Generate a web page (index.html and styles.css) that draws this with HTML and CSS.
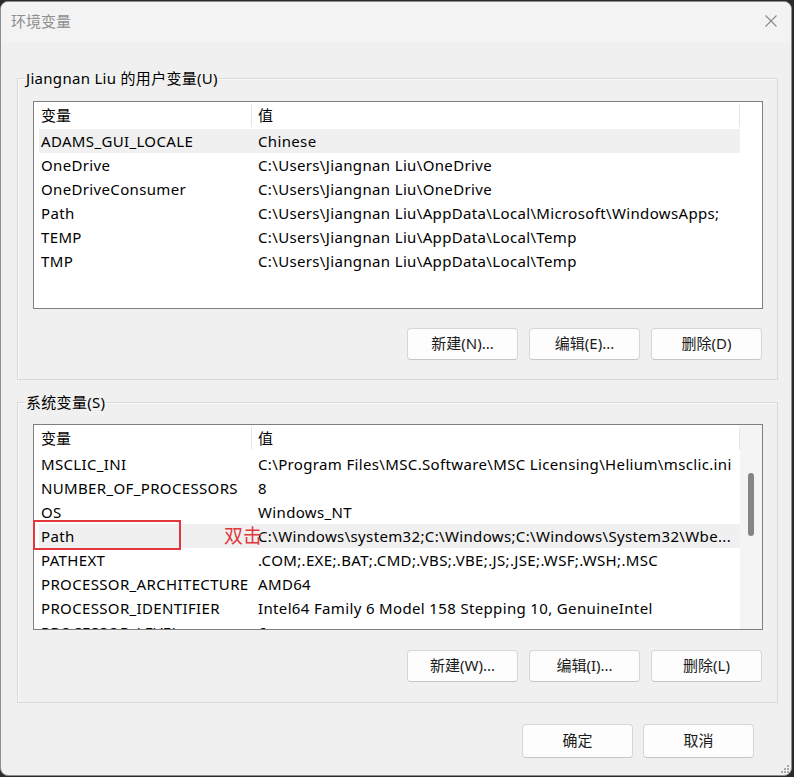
FILE: index.html
```html
<!DOCTYPE html>
<html lang="zh-CN">
<head>
<meta charset="utf-8">
<title>环境变量</title>
<link rel="stylesheet" href="styles.css">
</head>
<body>
<div class="window">
  <div class="titlebar">
    <span class="title">环境变量</span>
    <span class="close">
      <svg width="12" height="12" viewBox="0 0 12 12"><path d="M0.5 0.5 L11.5 11.5 M11.5 0.5 L0.5 11.5" stroke="#8a8a8a" stroke-width="1.1" fill="none"/></svg>
    </span>
  </div>

  <fieldset class="group group-user">
    <legend>Jiangnan Liu 的用户变量(U)</legend>
    <div class="list list-user">
      <div class="list-body">
        <div class="row head"><span class="c1">变量</span><span class="c2">值</span></div>
        <div class="row sel"><span class="c1">ADAMS_GUI_LOCALE</span><span class="c2">Chinese</span></div>
        <div class="row"><span class="c1">OneDrive</span><span class="c2">C:\Users\Jiangnan Liu\OneDrive</span></div>
        <div class="row"><span class="c1">OneDriveConsumer</span><span class="c2">C:\Users\Jiangnan Liu\OneDrive</span></div>
        <div class="row"><span class="c1">Path</span><span class="c2">C:\Users\Jiangnan Liu\AppData\Local\Microsoft\WindowsApps;</span></div>
        <div class="row"><span class="c1">TEMP</span><span class="c2">C:\Users\Jiangnan Liu\AppData\Local\Temp</span></div>
        <div class="row"><span class="c1">TMP</span><span class="c2">C:\Users\Jiangnan Liu\AppData\Local\Temp</span></div>
      </div>
      <div class="scroll-space"></div>
    </div>
    <div class="btnrow">
      <button class="btn">新建(N)...</button>
      <button class="btn">编辑(E)...</button>
      <button class="btn">删除(D)</button>
    </div>
  </fieldset>

  <fieldset class="group group-sys">
    <legend>系统变量(S)</legend>
    <div class="list list-sys">
      <div class="list-body">
        <div class="row head"><span class="c1">变量</span><span class="c2">值</span></div>
        <div class="row"><span class="c1">MSCLIC_INI</span><span class="c2">C:\Program Files\MSC.Software\MSC Licensing\Helium\msclic.ini</span></div>
        <div class="row"><span class="c1">NUMBER_OF_PROCESSORS</span><span class="c2">8</span></div>
        <div class="row"><span class="c1">OS</span><span class="c2">Windows_NT</span></div>
        <div class="row sel"><span class="c1">Path</span><span class="c2">C:\Windows\system32;C:\Windows;C:\Windows\System32\Wbe...</span></div>
        <div class="row"><span class="c1">PATHEXT</span><span class="c2">.COM;.EXE;.BAT;.CMD;.VBS;.VBE;.JS;.JSE;.WSF;.WSH;.MSC</span></div>
        <div class="row"><span class="c1">PROCESSOR_ARCHITECTURE</span><span class="c2">AMD64</span></div>
        <div class="row"><span class="c1">PROCESSOR_IDENTIFIER</span><span class="c2">Intel64 Family 6 Model 158 Stepping 10, GenuineIntel</span></div>
        <div class="row"><span class="c1">PROCESSOR_LEVEL</span><span class="c2">6</span></div>
      </div>
      <div class="scrollbar"><div class="thumb"></div></div>
      <div class="mark-box"></div>
      <div class="mark-text">双击</div>
    </div>
    <div class="btnrow">
      <button class="btn">新建(W)...</button>
      <button class="btn">编辑(I)...</button>
      <button class="btn">删除(L)</button>
    </div>
  </fieldset>

  <div class="footer">
    <button class="btn btn-lg">确定</button>
    <button class="btn btn-lg">取消</button>
  </div>

  <svg class="grip" width="9" height="9" viewBox="0 0 9 9">
    <rect x="7" y="1" width="2" height="2" fill="#a8a8a8"/>
    <rect x="4" y="4" width="2" height="2" fill="#a8a8a8"/>
    <rect x="7" y="4" width="2" height="2" fill="#a8a8a8"/>
    <rect x="1" y="7" width="2" height="2" fill="#a8a8a8"/>
    <rect x="4" y="7" width="2" height="2" fill="#a8a8a8"/>
    <rect x="7" y="7" width="2" height="2" fill="#a8a8a8"/>
  </svg>
</div>
</body>
</html>
```

FILE: styles.css
```css
* { box-sizing: border-box; }

html, body {
  margin: 0;
  padding: 0;
  background: #2a2a2a;
}

body {
  font-family: "Noto Sans", "Noto Sans CJK SC", sans-serif;
  font-size: 15px;
  color: #000;
  width: 794px;
  height: 777px;
  overflow: hidden;
}

.window {
  position: relative;
  margin-top: 1px;
  width: 792px;
  height: 775px;
  background: #f0f0f0;
  border: 1px solid #8e8e8e;
  border-radius: 8px;
  overflow: hidden;
}

.titlebar {
  height: 40px;
  display: flex;
  align-items: center;
  justify-content: space-between;
  padding: 0 14px 3px 10px;
  background: #f3f3f3;
}

.title {
  color: #8f8f8f;
  font-size: 15px;
  font-family: "Noto Sans CJK SC", sans-serif;
  line-height: 20px;
}

.close {
  display: flex;
  width: 12px;
  height: 12px;
}

.group {
  margin: 0 0 0 16px;
  width: 761px;
  border: 1px solid #d9d9d9;
  box-shadow: inset 1px 1px 0 #fafafa;
  padding: 13px 14px 19px 15px;
  min-inline-size: 0;
}

.group-user { margin-top: 26px; }
.group-sys { margin-top: 12px; padding-top: 12px; padding-bottom: 20px; }

.group legend {
  margin-left: -8px;
  padding: 0 1px;
  line-height: 20px;
  height: 20px;
  letter-spacing: 0.3px;
  font-family: "Noto Sans", "Noto Sans CJK SC", sans-serif;
}

.list {
  position: relative;
  display: flex;
  width: 730px;
  background: #fff;
  border: 1px solid #7f7f7f;
}

.list-user { height: 208px; }
.list-sys { height: 206px; }

.list-body {
  flex: 1;
  padding-left: 5px;
  overflow: hidden;
}

.scroll-space { width: 22px; }

.scrollbar {
  width: 22px;
  background: #f4f4f4;
  padding: 48px 0 0 8px;
}

.thumb {
  width: 6px;
  height: 63px;
  background: #858585;
  border-radius: 3px;
}

.row {
  display: flex;
  height: 24px;
  line-height: 24px;
  white-space: nowrap;
  letter-spacing: 0.35px;
}

.row.head {
  height: 27px;
  line-height: 27px;
}

.row.sel { background: #f0f0f0; }

.c1 {
  width: 213px;
  padding-left: 2px;
  flex: none;
  overflow: hidden;
}

.c2 {
  flex: 1;
  padding-left: 6px;
  overflow: hidden;
}

.head .c1, .head .c2 {
  border-right: 1px solid #e6e6e6;
  margin: 2px 0;
  line-height: 23px;
  letter-spacing: 0;
}

.btnrow {
  display: flex;
  justify-content: flex-end;
  gap: 11px;
  margin-top: 19px;
  padding-right: 1px;
}

.group-sys .btnrow { margin-top: 20px; }

.btn {
  width: 111px;
  height: 32px;
  background: #fdfdfd;
  border: 1px solid #d6d6d6;
  border-bottom-color: #c6c6c6;
  border-radius: 4px;
  font-family: "Noto Sans", "Noto Sans CJK SC", sans-serif;
  font-size: 15px;
  color: #1b1b1b;
  padding: 0 0 2px 0;
  line-height: 28px;
}

.footer {
  display: flex;
  justify-content: flex-end;
  gap: 10px;
  margin-top: 21px;
  padding-right: 37px;
}

.btn-lg { height: 34px; }

.mark-box {
  position: absolute;
  left: -1px;
  top: 95px;
  width: 148px;
  height: 30px;
  border: 2px solid #e3363d;
}

.mark-text {
  position: absolute;
  left: 190px;
  top: 100px;
  color: #e3363d;
  font-family: "Noto Sans CJK SC", sans-serif;
  font-size: 19px;
  line-height: 20px;
}

.grip {
  position: absolute;
  right: 2px;
  bottom: 2px;
}
```
